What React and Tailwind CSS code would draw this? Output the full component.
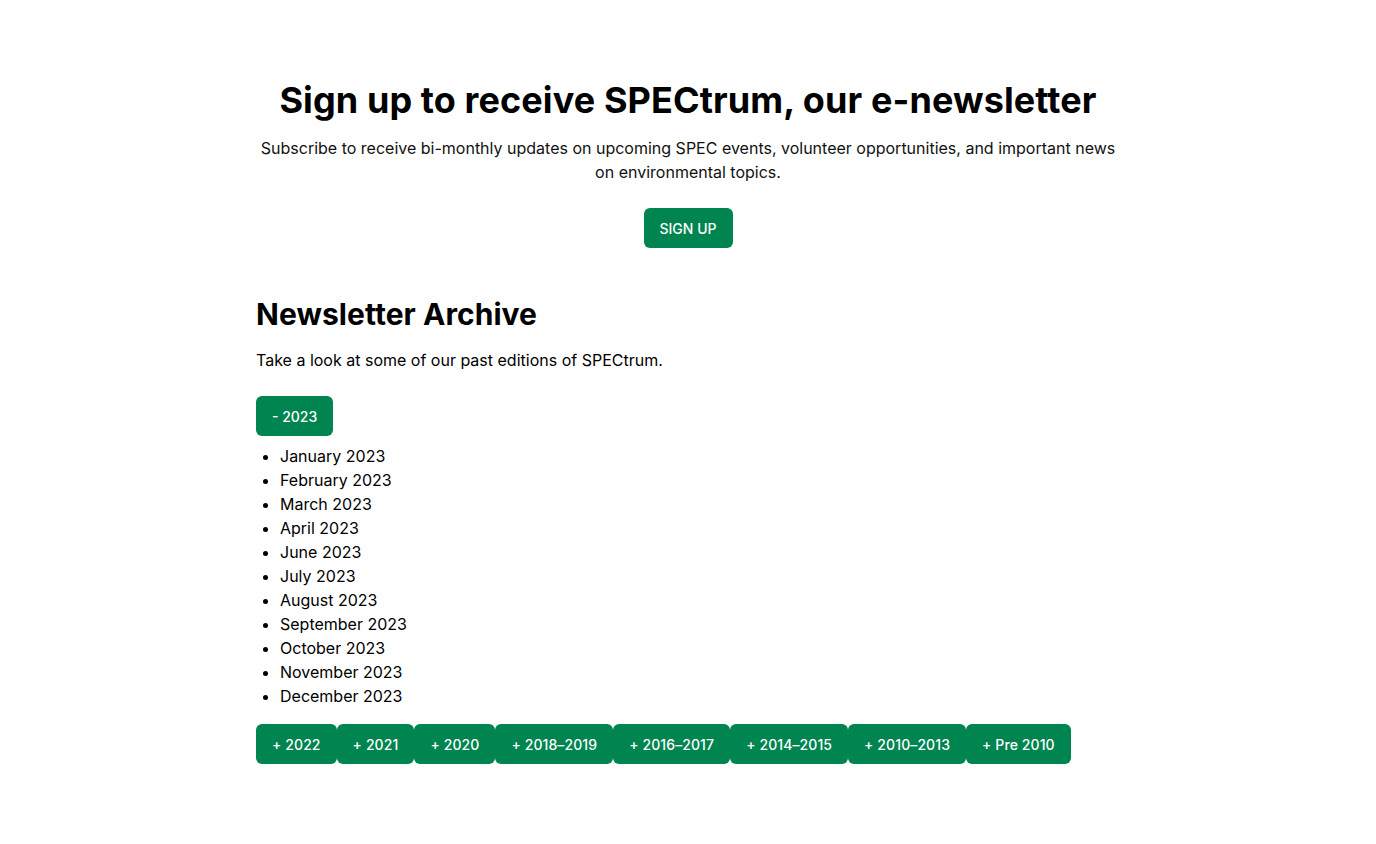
export default function App() {
  const months = ["January 2023","February 2023","March 2023","April 2023","June 2023","July 2023","August 2023","September 2023","October 2023","November 2023","December 2023"];
  const years = ["+ 2022","+ 2021","+ 2020","+ 2018–2019","+ 2016–2017","+ 2014–2015","+ 2010–2013","+ Pre 2010"];
  return (
    <div className="min-h-[844px] bg-white text-black" style={{ fontFamily: "Inter, 'Noto Sans', sans-serif" }}>
      <div className="mx-auto w-[864px] pt-[80px]">
        <section className="flex flex-col items-center text-center">
          <h1 className="text-[36px] leading-[40px] font-bold tracking-[0.1px]">Sign up to receive SPECtrum, our e-newsletter</h1>
          <p className="mt-[16px] text-[16px] leading-[24px] text-[#111]">Subscribe to receive bi-monthly updates on upcoming SPEC events, volunteer opportunities, and important news on environmental topics.</p>
          <button className="mt-[24px] h-[40px] px-[16px] rounded-[6px] bg-[#008450] text-white text-[14px] font-medium">SIGN UP</button>
        </section>
        <section className="mt-[48px]">
          <h2 className="text-[30px] leading-[36px] font-bold tracking-[0.05px]">Newsletter Archive</h2>
          <p className="mt-[16px] text-[16px] leading-[24px]">Take a look at some of our past editions of SPECtrum.</p>
          <button className="mt-[24px] h-[40px] px-[16px] rounded-[6px] bg-[#008450] text-white text-[14px] font-medium">- 2023</button>
          <ul className="mt-[8px] list-disc pl-[24px] text-[16px] leading-[24px]">
            {months.map(m => <li key={m}>{m}</li>)}
          </ul>
          <div className="mt-[16px] flex">
            {years.map(y => (
              <button key={y} className="h-[40px] px-[16px] rounded-[6px] bg-[#008450] text-white text-[14px] font-medium tracking-[0.1px]">{y}</button>
            ))}
          </div>
        </section>
      </div>
    </div>
  );
}
